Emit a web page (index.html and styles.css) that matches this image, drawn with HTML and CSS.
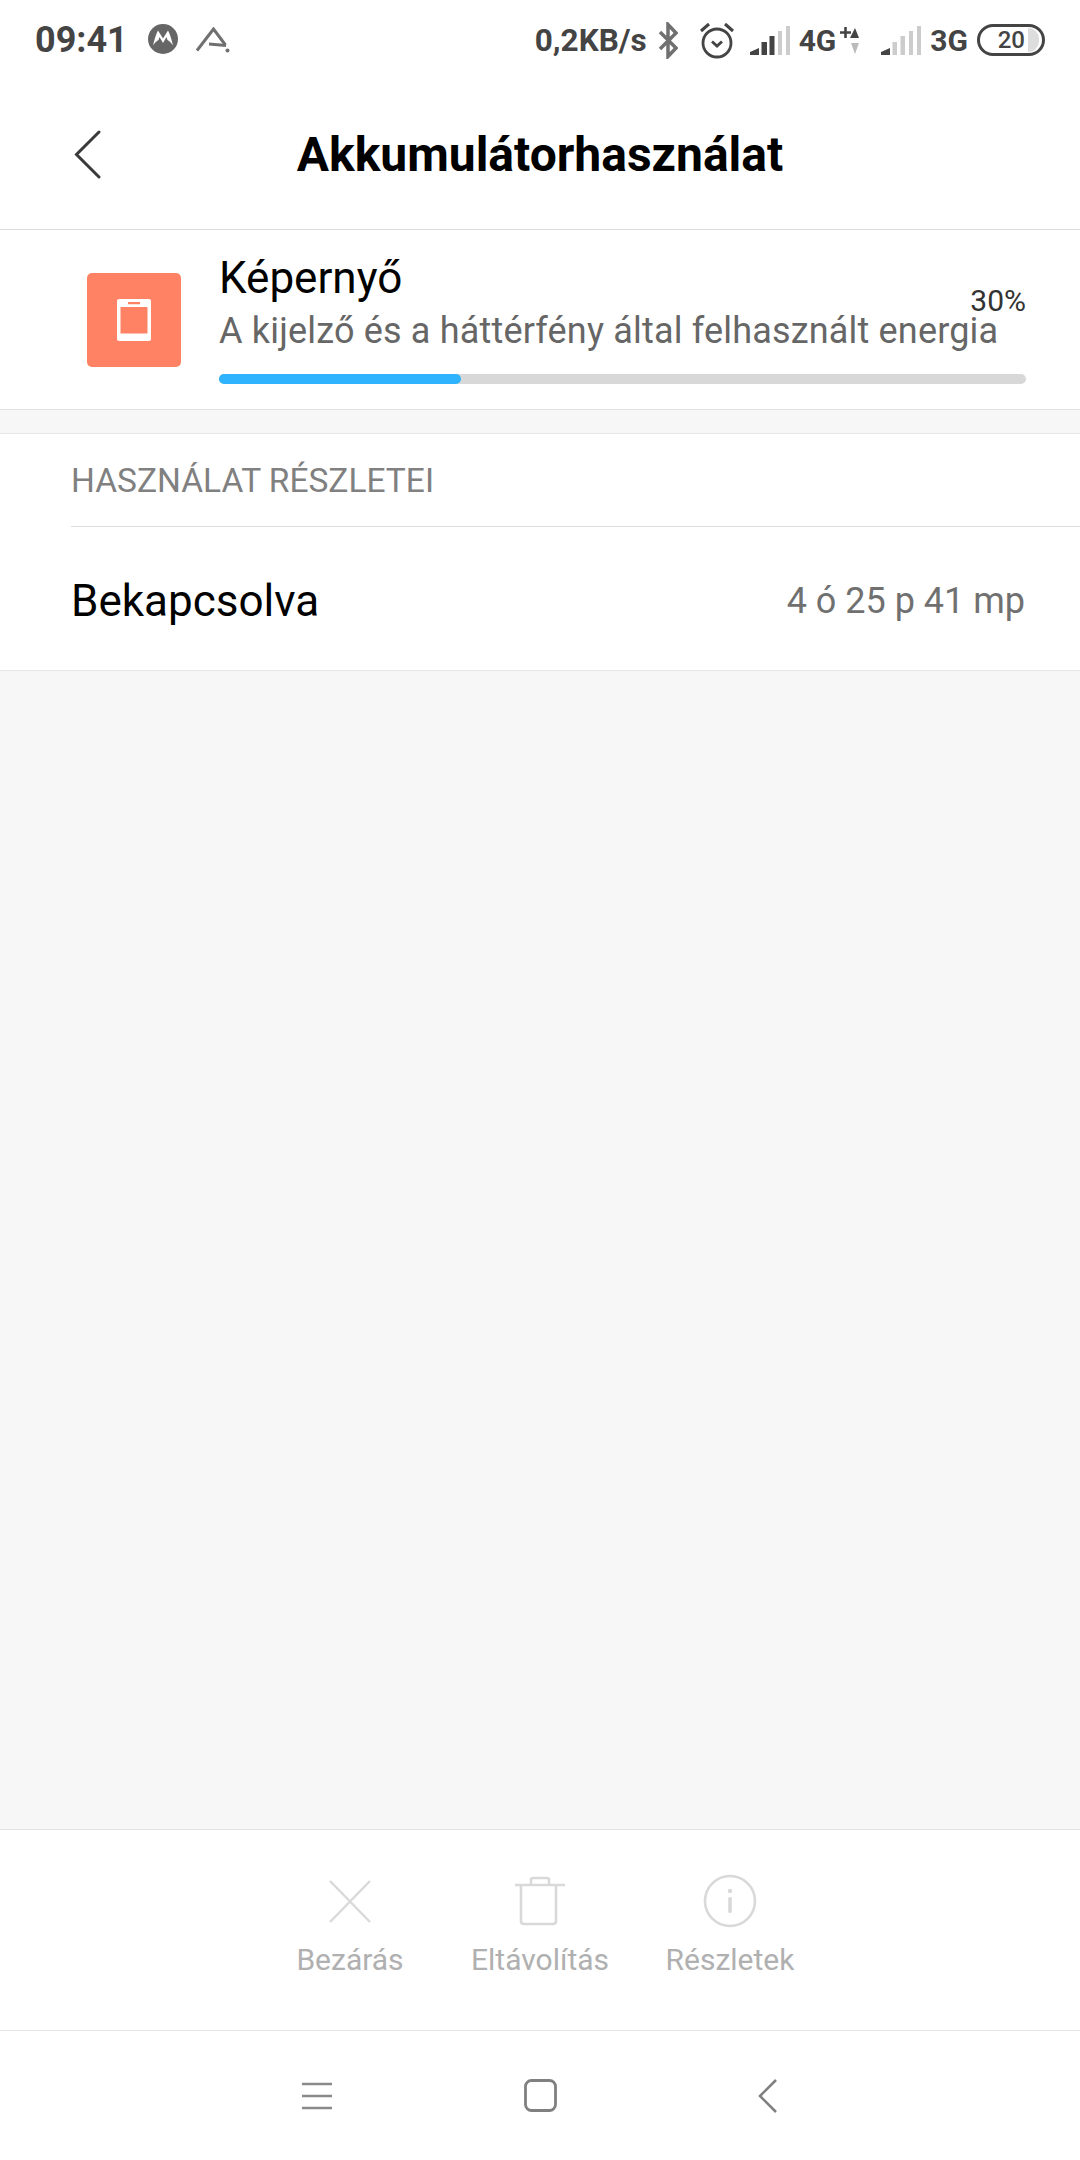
FILE: index.html
```html
<!DOCTYPE html>
<html lang="hu">
<head>
  <meta charset="UTF-8">
  <meta name="viewport" content="width=device-width, initial-scale=1.0">
  <title>Akkumulátorhasználat</title>
  <link rel="stylesheet" href="styles.css">
</head>
<body>
  <div class="screen">
    <!-- Status bar -->
    <div class="status-bar">
      <div class="status-left">
        <span class="clock">09:41</span>
        <svg class="moto-icon" width="30" height="30" viewBox="0 0 30 30">
          <circle cx="15" cy="15" r="15" fill="#666"/>
          <path d="M5 21.500 C6.500 15 8 10 10 6.500 L15 14.500 L20 6.500 C22 10 23.500 15 25 21.500 C23.500 19 21.500 17 19.500 16 L18.500 13 L15 19 L11.500 13 L10.500 16 C8.500 17 6.500 19 5 21.500 Z" fill="#fff"/>
        </svg>
        <svg class="arrow-icon" width="34" height="26" viewBox="0 0 34 26">
          <path d="M1 23.500 L17.500 2 L29.500 18" fill="none" stroke="#707070" stroke-width="3"/>
          <path d="M13 17 L30 18.500" fill="none" stroke="#707070" stroke-width="3"/>
          <circle cx="31.500" cy="23.500" r="2" fill="#707070"/>
        </svg>
      </div>
      <div class="status-right">
        <span class="speed">0,2KB/s</span>
        <svg class="bt-icon" width="20" height="37" viewBox="0 0 20 37">
          <path d="M2 10 L18 26 L10 34.500 L10 2.500 L18 11 L2 27" fill="none" stroke="#707070" stroke-width="3.500"/>
        </svg>
        <svg class="alarm-icon" width="34" height="37" viewBox="0 0 34 37">
          <circle cx="17" cy="21" r="14" fill="none" stroke="#444" stroke-width="2.800"/>
          <path d="M12 19.500 L17 24 L22 19.500" fill="none" stroke="#444" stroke-width="2.800"/>
          <path d="M1 9 L9 2 M33 9 L25 2" fill="none" stroke="#444" stroke-width="3"/>
        </svg>
        <svg class="signal-icon" width="40" height="29" viewBox="0 0 40 29">
          <path d="M0 29 V26 L9 22 V29 Z" fill="#444"/>
          <rect x="11.500" y="16" width="5.500" height="13" fill="#444"/>
          <rect x="19.500" y="10" width="5" height="19" fill="#444"/>
          <rect x="28" y="5" width="4" height="24" fill="#ccc"/>
          <rect x="36" y="0" width="4" height="29" fill="#ccc"/>
        </svg>
        <span class="net">4G</span>
        <svg class="data-icon" width="19" height="28" viewBox="0 0 19 28">
          <path d="M0 6.500 H11 M5.500 1 V12" stroke="#444" stroke-width="2.600" fill="none"/>
          <path d="M10 12 L15 2 L19 12 Z" fill="#444"/>
          <path d="M11 17 H19 L15 28 Z" fill="#bbb"/>
        </svg>
        <svg class="signal-icon signal-second" width="40" height="29" viewBox="0 0 40 29">
          <path d="M0 29 V26 L9 22 V29 Z" fill="#444"/>
          <rect x="11.500" y="16" width="4.500" height="13" fill="#ccc"/>
          <rect x="19.500" y="10" width="4.500" height="19" fill="#ccc"/>
          <rect x="28" y="5" width="4" height="24" fill="#ccc"/>
          <rect x="36" y="0" width="4" height="29" fill="#ccc"/>
        </svg>
        <span class="net">3G</span>
        <div class="battery">
          <span class="battery-level">20</span>
          <span class="battery-fill"></span>
        </div>
      </div>
    </div>

    <!-- Title bar -->
    <div class="title-bar">
      <svg class="back-icon" width="27" height="49" viewBox="0 0 27 49">
        <path d="M25 2 L2.500 24.500 L25 47" fill="none" stroke="#3a3a3a" stroke-width="3" stroke-linecap="round"/>
      </svg>
      <h1>Akkumulátorhasználat</h1>
    </div>

    <!-- Usage summary -->
    <div class="summary">
      <div class="app-icon">
        <svg width="34" height="42" viewBox="0 0 34 42">
          <path fill-rule="evenodd" d="M2 0 H32 Q34 0 34 2 V40 Q34 42 32 42 H2 Q0 42 0 40 V2 Q0 0 2 0 Z M3.500 8 V34.500 H30.500 V8 Z M11 3 V5.200 H23 V3 Z" fill="#fff"/>
        </svg>
      </div>
      <div class="summary-body">
        <div class="summary-title">Képernyő</div>
        <div class="summary-desc">A kijelző és a háttérfény által felhasznált energia</div>
        <span class="percent">30%</span>
        <div class="progress"><div class="progress-fill" style="width: 30%"></div></div>
      </div>
    </div>

    <div class="spacer"></div>

    <!-- Details -->
    <div class="details">
      <div class="details-head">HASZNÁLAT RÉSZLETEI</div>
      <div class="details-row">
        <span class="row-label">Bekapcsolva</span>
        <span class="row-value">4 ó 25 p 41 mp</span>
      </div>
    </div>

    <div class="filler"></div>

    <!-- Actions -->
    <div class="actions">
      <div class="action">
        <svg width="42" height="54" viewBox="0 0 42 54">
          <path d="M1 7 L41 48 M41 7 L1 48" fill="none" stroke="#d9d9d9" stroke-width="2.400"/>
        </svg>
        <span>Bezárás</span>
      </div>
      <div class="action">
        <svg width="50" height="54" viewBox="0 0 50 54">
          <path d="M0 11 H50 M16 10 V6 Q16 4 18 4 H32 Q34 4 34 6 V10 M6 11 V47 Q6 50 9 50 H38 Q41 50 41 47 V11" fill="none" stroke="#d9d9d9" stroke-width="2.600"/>
        </svg>
        <span>Eltávolítás</span>
      </div>
      <div class="action">
        <svg width="54" height="54" viewBox="0 0 54 54">
          <circle cx="27" cy="27" r="25" fill="none" stroke="#d9d9d9" stroke-width="2.600"/>
          <circle cx="27" cy="17" r="2.200" fill="#d9d9d9"/>
          <rect x="25.200" y="23" width="3.600" height="16" rx="1.500" fill="#d9d9d9"/>
        </svg>
        <span>Részletek</span>
      </div>
    </div>

    <!-- Navigation bar -->
    <div class="nav-bar">
      <div class="nav-item">
        <svg class="nav-menu" width="30" height="28" viewBox="0 0 30 28">
          <path d="M0 2 H30 M0 14 H30 M0 26 H30" stroke="#8a8a8a" stroke-width="2.600" fill="none"/>
        </svg>
      </div>
      <div class="nav-item">
        <svg width="33" height="33" viewBox="0 0 33 33">
          <rect x="1.500" y="1.500" width="30" height="30" rx="6" fill="none" stroke="#808080" stroke-width="2.800"/>
        </svg>
      </div>
      <div class="nav-item">
        <svg class="nav-back" width="19" height="34" viewBox="0 0 19 34">
          <path d="M18 1 L2 17 L18 33" fill="none" stroke="#808080" stroke-width="2.600"/>
        </svg>
      </div>
    </div>
  </div>
</body>
</html>
```

FILE: styles.css
```css
* {
  box-sizing: border-box;
}
body {
  margin: 0;
  padding: 0;
  font-family: Roboto, "Noto Sans", sans-serif;
  background-color: #fff;
}
.screen {
  display: flex;
  flex-direction: column;
  width: 1080px;
  height: 2160px;
  background-color: #f7f7f7;
}

/* Status bar */
.status-bar {
  display: flex;
  justify-content: space-between;
  align-items: center;
  height: 80px;
  padding: 0 35px;
  background-color: #fff;
  color: #444;
  font-weight: 700;
}
.status-left,
.status-right {
  display: flex;
  align-items: center;
}
.clock {
  font-size: 36px;
}
.moto-icon {
  margin: 0 0 2px 20px;
}
.arrow-icon {
  margin-left: 18px;
}
.speed {
  font-size: 31.5px;
}
.bt-icon {
  margin-left: 11px;
}
.alarm-icon {
  margin-left: 22px;
}
.signal-icon {
  margin-left: 16px;
}
.net {
  margin-left: 9px;
  font-size: 30px;
}
.data-icon {
  margin: 0 0 1px 4px;
}
.signal-second {
  margin-left: 22px;
}
.battery {
  display: flex;
  align-items: center;
  justify-content: flex-end;
  width: 68px;
  height: 32px;
  margin-left: 9px;
  padding-right: 3px;
  border: 3px solid #444;
  border-radius: 16px;
}
.battery-level {
  margin-right: 3px;
  font-size: 24px;
  font-weight: 500;
}
.battery-fill {
  width: 11px;
  height: 24px;
  border-radius: 0 12px 12px 0;
  background-color: #ddd;
}

/* Title bar */
.title-bar {
  position: relative;
  display: flex;
  align-items: center;
  justify-content: center;
  height: 150px;
  background-color: #fff;
  border-bottom: 1px solid #dcdcdc;
}
.title-bar h1 {
  margin: 0;
  font-size: 48px;
  font-weight: 700;
  color: #000;
}
.back-icon {
  position: absolute;
  left: 74px;
  top: 50px;
}

/* Summary */
.summary {
  display: flex;
  height: 180px;
  padding: 0 54px 0 87px;
  background-color: #fff;
  border-bottom: 1px solid #e2e2e2;
}
.app-icon {
  display: flex;
  align-items: center;
  justify-content: center;
  flex-shrink: 0;
  width: 94px;
  height: 94px;
  margin-top: 43px;
  border-radius: 5px;
  background-color: #ff8264;
}
.summary-body {
  position: relative;
  flex: 1;
  margin-left: 38px;
  padding-top: 22px;
}
.summary-title {
  font-size: 44px;
  line-height: 52px;
  color: #000;
}
.summary-desc {
  margin-top: 6px;
  font-size: 36px;
  line-height: 42px;
  letter-spacing: 0.18px;
  color: #666;
}
.percent {
  position: absolute;
  right: 0;
  top: 53px;
  font-size: 30px;
  color: #333;
}
.progress {
  height: 10px;
  margin-top: 22px;
  border-radius: 5px;
  background-color: #d8d8d8;
}
.progress-fill {
  height: 100%;
  border-radius: 5px;
  background-color: #2fb3ff;
}

.spacer {
  height: 23px;
}

/* Details */
.details {
  background-color: #fff;
  border-top: 1px solid #e6e6e6;
  border-bottom: 1px solid #e6e6e6;
}
.details-head {
  display: flex;
  align-items: center;
  height: 93px;
  margin-left: 71px;
  padding-top: 1px;
  font-size: 33.5px;
  color: #808080;
  border-bottom: 1px solid #dcdcdc;
}
.details-row {
  display: flex;
  justify-content: space-between;
  align-items: center;
  height: 143px;
  padding: 4px 55px 0 71px;
}
.row-label {
  font-size: 44px;
  color: #000;
}
.row-value {
  font-size: 36px;
  color: #707070;
}

.filler {
  flex: 1;
}

/* Bottom actions */
.actions {
  display: grid;
  grid-template-columns: repeat(3, 190px);
  justify-content: center;
  height: 202px;
  padding-top: 44px;
  background-color: #fff;
  border-top: 1px solid #e2e2e2;
  border-bottom: 1px solid #e6e6e6;
}
.action {
  display: flex;
  flex-direction: column;
  align-items: center;
  font-size: 30px;
  color: #b0b0b0;
}
.action span {
  margin-top: 14px;
}

/* Navigation bar */
.nav-bar {
  display: grid;
  grid-template-columns: repeat(3, 225px);
  justify-content: center;
  align-items: center;
  height: 129px;
  background-color: #fff;
}
.nav-item {
  display: flex;
  justify-content: center;
}
.nav-menu {
  margin-left: 4px;
}
.nav-back {
  margin-left: 4px;
}
```
